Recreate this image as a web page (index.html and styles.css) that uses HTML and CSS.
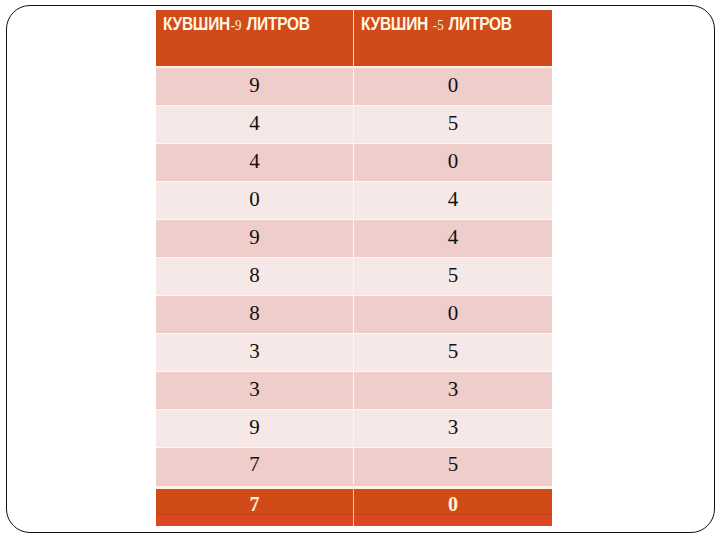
FILE: index.html
```html
<!DOCTYPE html>
<html lang="ru">
<head>
<meta charset="utf-8">
<title>Кувшины</title>
<link rel="stylesheet" href="styles.css">
</head>
<body>
<div class="slide">
  <div class="grid">
    <div class="hd left"><span class="hd-text">КУВШИН<span class="num">-9</span> ЛИТРОВ</span></div>
    <div class="hd"><span class="hd-text">КУВШИН <span class="num">-5</span> ЛИТРОВ</span></div>

    <div class="c dark left">9</div><div class="c dark">0</div>
    <div class="c light left">4</div><div class="c light">5</div>
    <div class="c dark left">4</div><div class="c dark">0</div>
    <div class="c light left">0</div><div class="c light">4</div>
    <div class="c dark left">9</div><div class="c dark">4</div>
    <div class="c light left">8</div><div class="c light">5</div>
    <div class="c dark left">8</div><div class="c dark">0</div>
    <div class="c light left">3</div><div class="c light">5</div>
    <div class="c dark left">3</div><div class="c dark">3</div>
    <div class="c light left">9</div><div class="c light">3</div>
    <div class="c dark left pre">7</div><div class="c dark pre">5</div>

    <div class="c last left">7</div><div class="c last">0</div>
  </div>
</div>
</body>
</html>
```
FILE: styles.css
```css
html, body {
  margin: 0;
  padding: 0;
  background: #ffffff;
}

.slide {
  box-sizing: border-box;
  width: 709px;
  height: 528px;
  margin: 5px 0 0 6px;
  border: 1px solid #111111;
  border-radius: 24px;
  padding: 4px 0 0 149px;
}

.grid {
  display: grid;
  grid-template-columns: 198px 198px;
  width: 396px;
}

.hd {
  box-sizing: border-box;
  height: 58px;
  background: #d14a1a;
  border-bottom: 2px solid #fbf1de;
  color: #fff6e0;
  font-family: "Liberation Sans", Arial, sans-serif;
  font-weight: bold;
  font-size: 18px;
  padding: 3px 0 0 7px;
  line-height: 22px;
  white-space: nowrap;
}

.hd-text {
  display: inline-block;
  transform: scaleX(0.86);
  transform-origin: left center;
  letter-spacing: -0.3px;
}

.hd.left {
  border-right: 1px solid #f6dcc0;
}

.num {
  font-family: "Liberation Serif", serif;
  font-weight: normal;
  font-size: 15px;
  letter-spacing: 0;
  padding: 0 1px;
}

.c {
  box-sizing: border-box;
  height: 38px;
  border-bottom: 1px solid #fdf6f5;
  display: flex;
  align-items: center;
  justify-content: center;
  font-family: "Liberation Serif", "Times New Roman", serif;
  font-size: 21px;
  color: #111111;
  padding-bottom: 2px;
}

.c.left {
  border-right: 1px solid #fdf6f5;
}

.dark {
  background: #eecdca;
}

.light {
  background: #f5e8e7;
}

.pre {
  border-bottom: 3px solid #f7c7c7;
}

.last {
  height: 40px;
  border-top: 3px solid #fcf4e6;
  border-bottom: none;
  background: linear-gradient(#d14b19 0, #d14b19 24px, #c9461a 24px, #c9461a 26px, #de4521 26px);
  color: #fff3d6;
  font-weight: bold;
  font-size: 20px;
  padding-bottom: 7px;
}

.last.left {
  border-right: 1px solid #f2c9a8;
}
```
